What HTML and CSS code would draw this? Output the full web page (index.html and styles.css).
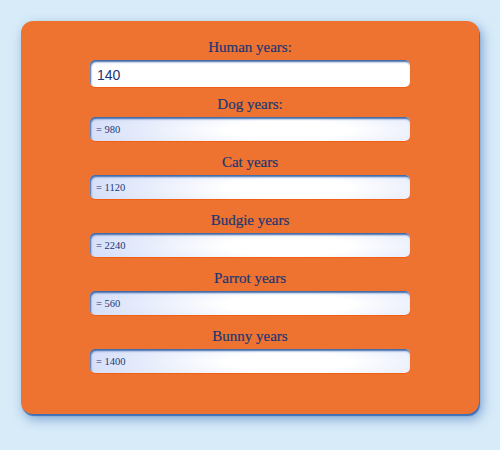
FILE: index.html
```html
<!DOCTYPE html>
<html>
<head>
<meta charset="utf-8">
<link rel="stylesheet" href="styles.css">
</head>
<body>
<div class="card">
  <div class="group first">
    <label class="label">Human years:</label>
    <input class="field" type="text" value="140">
  </div>
  <div class="group g2">
    <div class="label">Dog years:</div>
    <div class="out">= 980</div>
  </div>
  <div class="group">
    <div class="label">Cat years</div>
    <div class="out">= 1120</div>
  </div>
  <div class="group">
    <div class="label">Budgie years</div>
    <div class="out">= 2240</div>
  </div>
  <div class="group">
    <div class="label">Parrot years</div>
    <div class="out">= 560</div>
  </div>
  <div class="group">
    <div class="label">Bunny years</div>
    <div class="out">= 1400</div>
  </div>
</div>
</body>
</html>
```

FILE: styles.css
```css
html, body {
  margin: 0;
  padding: 0;
  background: #d7ebf9;
  width: 500px;
  height: 450px;
  overflow: hidden;
}
body {
  padding: 21px 0 0 21px;
  box-sizing: border-box;
  font-family: "Liberation Serif", serif;
}
.card {
  width: 458px;
  height: 393px;
  box-sizing: border-box;
  background: #ef7330;
  border-radius: 12px;
  box-shadow: 1px 2px 1px #3d6fb8, 3px 5px 12px rgba(60, 110, 180, 0.6);
  padding: 16px 0 0 0;
  display: flex;
  flex-direction: column;
  align-items: center;
}
.group {
  display: flex;
  flex-direction: column;
  align-items: center;
  margin-top: 11px;
}
.group.first { margin-top: 0; }
.group.g2 { margin-top: 7px; }
.label {
  display: block;
  font-size: 15px;
  line-height: 20px;
  color: #1a3775;
  margin-bottom: 3px;
  -webkit-text-stroke: 0.2px #1a3775;
}
.field {
  width: 320px;
  height: 27px;
  box-sizing: border-box;
  border: none;
  outline: none;
  border-radius: 5px;
  background: #fff;
  padding: 2px 0 0 7px;
  margin: 0;
  font-family: "Liberation Sans", Arial, sans-serif;
  font-size: 14px;
  color: #1a3775;
  box-shadow: inset 1px 2px 2px #3b66a8, 0 1px 0 #f25f12;
}
.out {
  width: 320px;
  height: 24px;
  box-sizing: border-box;
  border-radius: 5px;
  padding: 6px 0 0 6px;
  font-size: 10.5px;
  line-height: 14px;
  color: #1a3775;
  background: radial-gradient(ellipse 70% 140% at 62% 55%, #ffffff 28%, #cfdaf8 100%);
  box-shadow: inset 1px 2px 2px #3b66a8, 0 1px 0 #f25f12;
}
```
